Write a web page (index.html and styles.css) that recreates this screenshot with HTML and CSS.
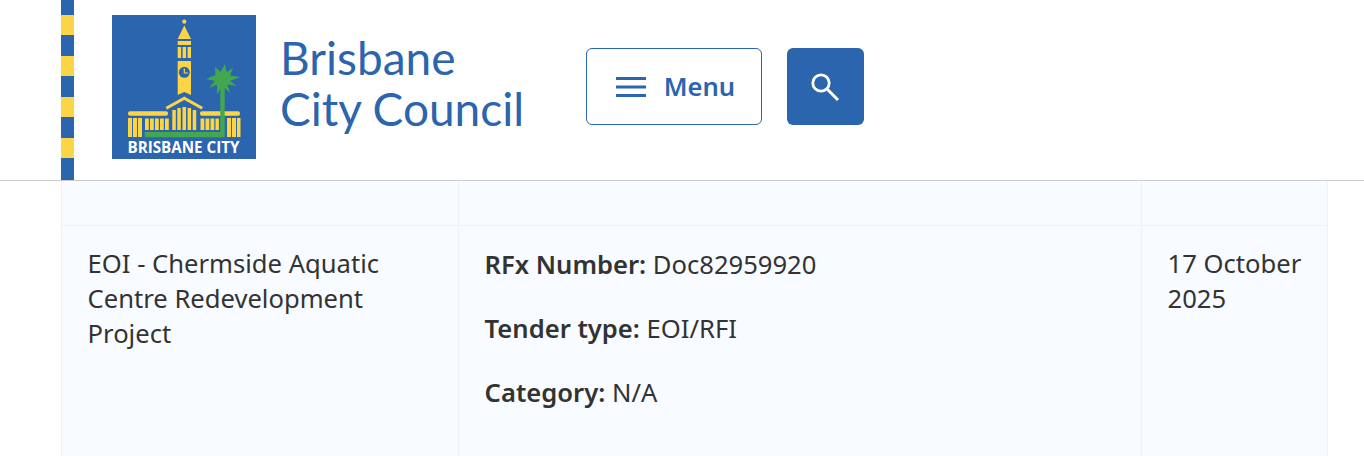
FILE: index.html
```html
<!DOCTYPE html>
<html lang="en">
<head>
<meta charset="utf-8">
<title>Brisbane City Council</title>
<link rel="stylesheet" href="styles.css">
</head>
<body>
<header class="site-header">
  <div class="stripe"></div>
  <a class="brand" href="#">
    <svg class="logo" viewBox="0 0 144 144" width="144" height="144" aria-label="Brisbane City Council logo">
      <rect width="144" height="144" fill="#2b65ad"/>
      <g fill="#fbd545">
        <circle cx="72.300" cy="6.700" r="2.100"/>
        <path d="M72.300 10.500 L79 24 H65.700 Z"/>
        <rect x="65.700" y="26" width="13.300" height="4"/>
        <path d="M65.700 32 h3.400 v11 h-3.400z M70.600 32 h3.400 v11 h-3.400z M75.600 32 h3.400 v11 h-3.400z"/>
        <path d="M65.700 46 H79 V80 L72.300 77 L65.700 80 Z"/>
        <path d="M72.300 81.500 L91 92 L89.500 94.500 L72.300 85 L55 94.500 L53.500 92 Z"/>
        <path d="M60.300 95 h3.500 v20 h-3.500z M65.300 93 h3.500 v22 h-3.500z M70.500 92 h3.500 v23 h-3.500z M75.600 93 h3.500 v22 h-3.500z M80.700 95 h3.500 v20 h-3.500z"/>
        <rect x="16" y="96.300" width="40" height="4.400" rx="2"/>
        <rect x="88" y="96.300" width="40" height="4.400" rx="2"/>
        <path d="M16 103 h4 v19 h-4z M21 103 h4 v19 h-4z M26 103 h4 v19 h-4z"/>
        <path d="M33 103.500 h3.800 v11.500 h-3.800z M38 103.500 h3.800 v11.500 h-3.800z M43 103.500 h3.800 v11.500 h-3.800z M48 103.500 h3.800 v11.500 h-3.800z M53 103.500 h3.800 v11.500 h-3.800z"/>
        <path d="M88.500 103.500 h3.800 v11.500 h-3.800z M93.500 103.500 h3.800 v11.500 h-3.800z M98.500 103.500 h3.800 v11.500 h-3.800z M103.500 103.500 h3.400 v11.500 h-3.400z"/>
        <path d="M115 103 h4 v19 h-4z M120 103 h4 v19 h-4z M125 103 h3.500 v19 h-3.500z"/>
      </g>
      <circle cx="72.300" cy="57.300" r="5.500" fill="#2b65ad"/>
      <path d="M72.300 53.500 V58 H76" fill="none" stroke="#fbd545" stroke-width="1.200"/>
      <g fill="#43a74f">
        <path d="M32.700 117 H108.300 V68 h4.400 V122.300 H32.700 Z"/>
        <path d="M113 49 L114.500 57 L121 53 L118 60.500 L128 62 L118 66 L125 71 L115.500 69.500 L118 78 L110.700 71 L105 79 L105 69.500 L97 73 L103 66 L94 64 L103.500 60 L103 52 L108.500 57 Z"/>
      </g>
      <text class="logo-text" x="71.500" y="138.300" text-anchor="middle">BRISBANE CITY</text>
    </svg>
    <span class="brand-name">Brisbane<br>City Council</span>
  </a>
  <div class="actions">
    <button class="menu-btn" type="button">
      <svg class="menu-icon" viewBox="0 0 30 20" width="30" height="20"><path d="M0 1.500h30M0 10h30M0 18.500h30" stroke="#2b65ad" stroke-width="3"/></svg>
      <span>Menu</span>
    </button>
    <button class="search-btn" type="button" aria-label="Search">
      <svg viewBox="0 0 30 30" width="30" height="30"><circle cx="10" cy="11" r="8.200" fill="none" stroke="#fff" stroke-width="2.800"/><path d="M15.800 16.800 L27 28" stroke="#fff" stroke-width="3"/></svg>
    </button>
  </div>
</header>
<main class="content">
  <table class="tenders">
    <colgroup><col class="col-a"><col class="col-b"><col class="col-c"></colgroup>
    <tr class="spacer"><td></td><td></td><td></td></tr>
    <tr>
      <td>EOI - Chermside Aquatic Centre Redevelopment Project</td>
      <td>
        <p><strong>RFx Number:</strong> Doc82959920</p>
        <p><strong>Tender type:</strong> EOI/RFI</p>
        <p><strong>Category:</strong> N/A</p>
      </td>
      <td class="date">17 October 2025</td>
    </tr>
  </table>
</main>
</body>
</html>
```
FILE: styles.css
```css
html, body { margin: 0; padding: 0; background: #fff; overflow: hidden; }
body { height: 456px; font-family: "Noto Sans", sans-serif; color: #333; }
.site-header {
  height: 180px;
  border-bottom: 1px solid #cdcdcf;
  padding-left: 61px;
  display: flex;
  align-items: flex-start;
}
.stripe {
  width: 13px;
  height: 180px;
  flex: none;
  background: repeating-linear-gradient(180deg, #2b65ad 0 20.5px, #fbd545 20.5px 41px);
  background-position: 0 -6px;
}
.brand {
  display: flex;
  align-items: center;
  margin: 15px 0 0 38px;
  text-decoration: none;
  width: 474px;
  flex: none;
}
.logo { display: block; flex: none; }
.logo-text { font: 700 15.200px "Open Sans", sans-serif; fill: #fff; }
.brand-name {
  margin-left: 24px;
  font: 400 46px/51px "Lato", sans-serif;
  color: #2b65ad;
  position: relative;
  top: -4px;
  white-space: nowrap;
}
.actions { display: flex; gap: 25px; margin-top: 48px; }
.menu-btn, .search-btn { height: 77px; cursor: pointer; font-family: inherit; padding: 0; box-sizing: border-box; }
.menu-btn {
  width: 176px;
  padding-left: 3px;
  background: #fff;
  border: 1px solid #2b65ad;
  border-radius: 6px;
  color: #2b65ad;
  font-size: 25.600px;
  font-weight: 600;
  display: flex;
  align-items: center;
  justify-content: center;
  gap: 18px;
}
.search-btn {
  width: 77px;
  background: #2b65ad;
  border: 0;
  border-radius: 6px;
  display: flex;
  align-items: center;
  justify-content: center;
}
.content { padding-left: 61px; }
.tenders {
  border-collapse: collapse;
  table-layout: fixed;
  width: 1266px;
  background: #f8fbff;
  font-size: 25.600px;
  line-height: 35px;
}
.col-a { width: 397px; }
.col-b { width: 683px; }
.col-c { width: 186px; }
.tenders td {
  border: 1px solid #eef2f6;
  border-top: 0;
  padding: 20px 25.600px 30px;
  vertical-align: top;
}
.tenders .spacer td { padding: 0; height: 44px; }
.tenders .date { padding-right: 16px; }
.tenders p { margin: 0 0 29px; }
.tenders p:first-child { margin-top: 1px; }
.tenders strong { font-weight: 600; }
```
